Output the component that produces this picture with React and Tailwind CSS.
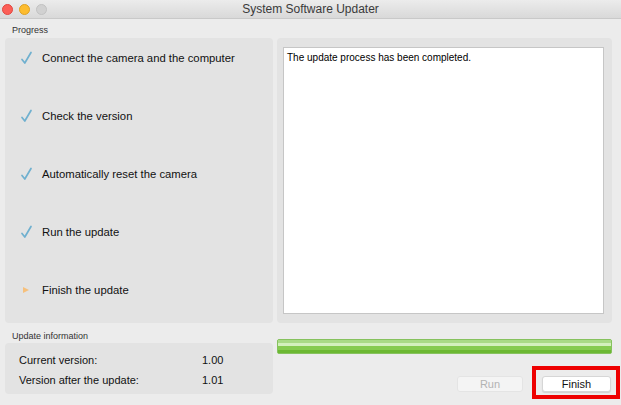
import React from 'react';

const steps = [
  { label: 'Connect the camera and the computer', done: true },
  { label: 'Check the version', done: true },
  { label: 'Automatically reset the camera', done: true },
  { label: 'Run the update', done: true },
  { label: 'Finish the update', done: false },
];

const CheckMark = () => (
  <svg width="13" height="14" viewBox="0 0 13 14" className="shrink-0">
    <path d="M2 8.5 L4.8 12 L11 1.5" fill="none" stroke="#6fb0cf" strokeWidth="1.7" strokeLinecap="round" strokeLinejoin="round" />
  </svg>
);

const Arrow = () => (
  <svg width="13" height="14" viewBox="0 0 13 14" className="shrink-0">
    <path d="M3 4 L9 7 L3 10 Z" fill="#f6c07c" />
  </svg>
);

const App = () => {
  return (
    <div className="w-[621px] h-[405px] bg-[#ececec] overflow-hidden text-black" style={{ fontFamily: '"Liberation Sans", Arial, sans-serif' }}>
      {/* title bar */}
      <div className="relative h-[19px] flex items-center border-b border-[#c9c9c9] bg-gradient-to-b from-[#ececec] to-[#d9d9d9]">
        <div className="flex items-center gap-[6px] pl-[2px]">
          <span className="w-[11px] h-[11px] rounded-full bg-[#fc5f57] border border-[#e2463f]" />
          <span className="w-[11px] h-[11px] rounded-full bg-[#fdbc2e] border border-[#dea123]" />
          <span className="w-[11px] h-[11px] rounded-full bg-[#d1d1d1] border border-[#c2c2c2]" />
        </div>
        <div className="absolute inset-0 flex items-center justify-center text-[12px] text-[#3a3a3a]">
          System Software Updater
        </div>
      </div>

      <div className="flex gap-[4px] pl-[5px]">
        {/* left column */}
        <div className="w-[268px] flex flex-col">
          <div className="h-[19px] pl-[7px] pt-[6px] text-[9px] leading-[11px] text-[#333]">Progress</div>
          <div className="h-[285px] rounded-[4px] bg-[#e3e3e3] pt-[12px] pl-[15px] flex flex-col gap-[42px]">
            {steps.map((s) => (
              <div key={s.label} className="h-[16px] flex items-center gap-[9px]">
                {s.done ? <CheckMark /> : <Arrow />}
                <span className="text-[11.3px] text-[#111]">{s.label}</span>
              </div>
            ))}
          </div>
          <div className="h-[20px] pl-[7px] pt-[8px] text-[9px] leading-[11px] text-[#333]">Update information</div>
          <div className="h-[51px] rounded-[4px] bg-[#e3e3e3] pl-[14px] pt-[10px] flex flex-col gap-[6px] text-[11px] text-[#111]">
            <div className="flex h-[14px] items-center">
              <span className="w-[183px]">Current version:</span>
              <span>1.00</span>
            </div>
            <div className="flex h-[14px] items-center">
              <span className="w-[183px]">Version after the update:</span>
              <span>1.01</span>
            </div>
          </div>
        </div>

        {/* right column */}
        <div className="w-[335px] flex flex-col">
          <div className="h-[19px]" />
          <div className="h-[285px] rounded-[4px] bg-[#e3e3e3] pt-[9px] pl-[6px] pr-[8px] pb-[9px]">
            <div className="h-full bg-white border border-[#c6c6c6] px-[3px] pt-[2px] text-[10px] text-black">
              The update process has been completed.
            </div>
          </div>
          <div className="mt-[16px] h-[15px] rounded-[2px] border border-[#86c25e] bg-[#7cc444] flex flex-col">
            <div className="h-[3px] bg-[#a9da86]" />
            <div className="h-[3px] bg-[#d3f0bd]" />
            <div className="h-[4px] bg-[#86cb50]" />
            <div className="flex-1 bg-[#6cb833]" />
          </div>
          <div className="mt-[22px] flex justify-end gap-[19px] pr-[1px]">
            <div className="w-[66px] h-[16px] rounded-[3px] bg-[#f4f4f4] border border-[#e4e4e4] flex items-center justify-center text-[11px] text-[#b3b3b3]">
              Run
            </div>
            <div className="relative w-[69px] h-[16px] rounded-[3px] bg-white border border-[#d6d6d6] shadow-[0_1px_1px_rgba(0,0,0,0.12)] flex items-center justify-center text-[11px] text-[#111]">
              Finish
              <div className="absolute left-[-11px] top-[-11px] w-[88px] h-[33px] border-[4px] border-[#ee0000]" />
            </div>
          </div>
        </div>
      </div>
    </div>
  );
};

export default App;
